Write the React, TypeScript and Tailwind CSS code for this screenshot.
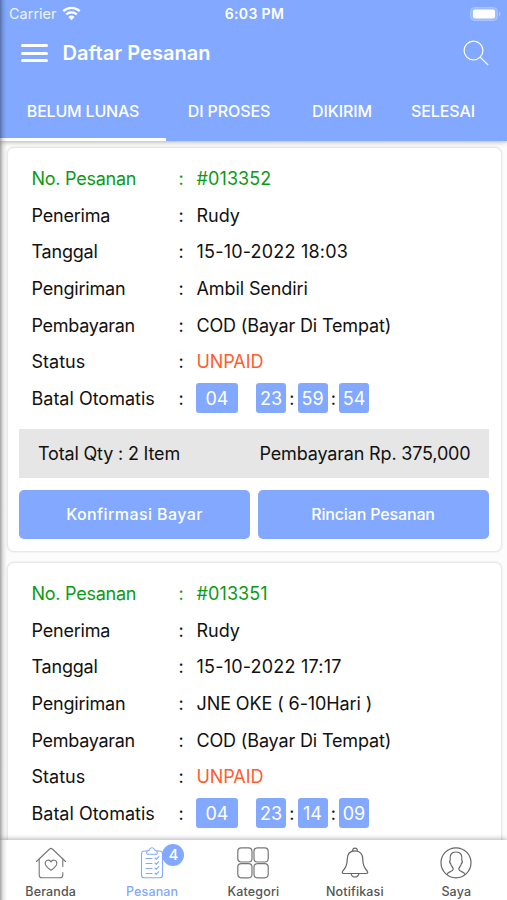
import type { ReactNode } from 'react'
import clsx from 'clsx'

type Order = {
  number: string
  recipient: string
  date: string
  shipping: string
  payment: string
  status: string
  countdown: string[]
  summary?: { quantity: number; total: string }
}

const orders: Order[] = [
  {
    number: '#013352',
    recipient: 'Rudy',
    date: '15-10-2022 18:03',
    shipping: 'Ambil Sendiri',
    payment: 'COD (Bayar Di Tempat)',
    status: 'UNPAID',
    countdown: ['04', '23', '59', '54'],
    summary: { quantity: 2, total: '375,000' },
  },
  {
    number: '#013351',
    recipient: 'Rudy',
    date: '15-10-2022 17:17',
    shipping: 'JNE OKE ( 6-10Hari )',
    payment: 'COD (Bayar Di Tempat)',
    status: 'UNPAID',
    countdown: ['04', '23', '14', '09'],
  },
]

export default function App() {
  return (
    <div className="relative flex h-[900px] w-[507px] flex-col overflow-hidden bg-[#fcfcfc] font-['Inter','Liberation_Sans',sans-serif] text-[#111] antialiased">
      <Header />
      <main className="min-h-0 flex-1 overflow-hidden pt-[6px] pr-[5.5px] pl-[6.5px]">
        {orders.map((order) => (
          <OrderCard key={order.number} order={order} />
        ))}
      </main>
      <TabBar />
      <div className="pointer-events-none absolute inset-y-0 left-0 z-20 w-[7px] bg-linear-to-r from-black/35 via-black/10 via-45% to-transparent" />
    </div>
  )
}

function Header() {
  return (
    <header className="relative z-10 h-[141px] shrink-0 bg-[#82a9ff] text-white shadow-[0_1px_5px_rgba(0,0,0,0.3)]">
      <div className="flex h-[27px] items-center justify-between pr-[6px] pl-[9px]">
        <div className="flex w-[100px] items-center gap-[5px] text-[14.5px] text-white/85">
          Carrier
          <WifiIcon />
        </div>
        <span className="text-[14px] font-semibold tracking-[0.35px]">6:03 PM</span>
        <div className="flex w-[101px] justify-end">
          <BatteryIcon />
        </div>
      </div>

      <div className="flex h-[52px] items-center pr-[18px] pl-[21px]">
        <button type="button" aria-label="Menu" className="flex w-[27px] flex-col gap-[4.5px]">
          <span className="h-[3px] rounded-full bg-white" />
          <span className="h-[3px] rounded-full bg-white" />
          <span className="h-[3px] rounded-full bg-white" />
        </button>
        <h1 className="ml-[14.5px] text-[20px] font-semibold tracking-[0.03px]">Daftar Pesanan</h1>
        <button type="button" aria-label="Cari" className="ml-auto">
          <SearchIcon />
        </button>
      </div>

      <div className="flex h-[62px] text-[16px] font-medium tracking-[-0.1px]">
        <Tab className="w-[166px] border-white tracking-[-0.2px]">BELUM LUNAS</Tab>
        <Tab className="w-[126px] border-transparent">DI PROSES</Tab>
        <Tab className="w-[100px] border-transparent">DIKIRIM</Tab>
        <Tab className="w-[102px] border-transparent">SELESAI</Tab>
      </div>
    </header>
  )
}

function Tab({ className, children }: { className: string; children: ReactNode }) {
  return (
    <button
      type="button"
      className={clsx('flex items-center justify-center border-b-[3px] pt-[4px]', className)}
    >
      {children}
    </button>
  )
}

function OrderCard({ order }: { order: Order }) {
  const [days, hours, minutes, seconds] = order.countdown

  return (
    <section className="mb-[10.5px] h-[404.5px] rounded-[7px] border border-[#e8e8e8] bg-white px-[11.5px] pt-[12.2px] shadow-[0_0_2px_rgba(0,0,0,0.12)]">
      <dl className="pl-[12.5px] text-[18px]">
        <Row label="No. Pesanan" className="tracking-[-0.25px] text-[#0b9a14]">
          <span className="tracking-[0.1px]">{order.number}</span>
        </Row>
        <Row label="Penerima" className="tracking-[-0.2px]">
          <span className="tracking-normal">{order.recipient}</span>
        </Row>
        <Row label="Tanggal" className="tracking-[-0.2px]">
          <span className="tracking-[0.2px]">{order.date}</span>
        </Row>
        <Row label="Pengiriman" className="tracking-[-0.2px]">
          <span className="tracking-[-0.1px]">{order.shipping}</span>
        </Row>
        <Row label="Pembayaran" className="tracking-[-0.3px]">
          <span className="tracking-[-0.15px]">{order.payment}</span>
        </Row>
        <Row label="Status">
          <span className="tracking-[-0.1px] text-[#ff5b2e]">{order.status}</span>
        </Row>
        <Row label="Batal Otomatis">
          <span className="-ml-[0.5px] flex items-center">
            <TimeBox className="mr-[18px] w-[42px]">{days}</TimeBox>
            <TimeBox className="w-[30px]">{hours}</TimeBox>
            <span className="w-[11.5px] text-center">:</span>
            <TimeBox className="w-[30px]">{minutes}</TimeBox>
            <span className="w-[11.5px] text-center">:</span>
            <TimeBox className="w-[30px]">{seconds}</TimeBox>
          </span>
        </Row>
      </dl>

      {order.summary ? (
        <>
          <div className="mt-[12px] flex h-[49px] items-center justify-between bg-[#e6e6e6] pr-[18.5px] pl-[19px] text-[18px] tracking-[-0.17px]">
            <span>Total Qty : {order.summary.quantity} Item</span>
            <span>Pembayaran Rp. {order.summary.total}</span>
          </div>

          <div className="mt-[12px] grid grid-cols-2 gap-[8px] text-[16px] font-medium text-white">
            <button
              type="button"
              className="h-[49px] rounded-[5px] bg-[#82a9ff] tracking-[0.4px]"
            >
              Konfirmasi Bayar
            </button>
            <button
              type="button"
              className="h-[49px] rounded-[5px] bg-[#82a9ff] pr-px tracking-[-0.15px]"
            >
              Rincian Pesanan
            </button>
          </div>
        </>
      ) : null}
    </section>
  )
}

function Row({
  label,
  className,
  children,
}: {
  label: string
  className?: string
  children: ReactNode
}) {
  return (
    <div className={clsx('flex h-[36.65px] items-center', className)}>
      <dt className="w-[147px]">{label}</dt>
      <span className="w-[18px]">:</span>
      <dd>{children}</dd>
    </div>
  )
}

function TimeBox({ className, children }: { className: string; children: ReactNode }) {
  return (
    <span
      className={clsx(
        'flex h-[30px] items-center justify-center rounded-[3px] bg-[#82a9ff] text-white',
        className,
      )}
    >
      {children}
    </span>
  )
}

function TabBar() {
  return (
    <nav className="relative z-10 grid h-[60px] shrink-0 grid-cols-5 bg-white text-[12.5px] font-medium tracking-[0.15px] text-[#555] shadow-[0_-1px_5px_rgba(0,0,0,0.3)]">
      <TabBarItem label="Beranda">
        <HomeIcon />
      </TabBarItem>
      <TabBarItem label="Pesanan" className="text-[#82a9ff]">
        <OrdersIcon />
        <span className="absolute top-[4px] left-[61px] flex size-[22px] items-center justify-center rounded-full bg-[#82a9ff] text-[15px] tracking-normal text-white">
          4
        </span>
      </TabBarItem>
      <TabBarItem label="Kategori">
        <CategoryIcon />
      </TabBarItem>
      <TabBarItem label="Notifikasi">
        <BellIcon />
      </TabBarItem>
      <TabBarItem label="Saya">
        <ProfileIcon />
      </TabBarItem>
    </nav>
  )
}

function TabBarItem({
  label,
  className,
  children,
}: {
  label: string
  className?: string
  children: ReactNode
}) {
  return (
    <a className={clsx('relative flex flex-col items-center pt-[6px]', className)}>
      {children}
      <span className="mt-[5px] leading-4">{label}</span>
    </a>
  )
}

function WifiIcon() {
  return (
    <svg width="19" height="15" viewBox="0 0 19 15" fill="none" stroke="white" strokeWidth="2.4">
      <path d="M1.3 5.2a11.8 11.8 0 0 1 16.4 0" />
      <path d="M4.2 8.5a7.6 7.6 0 0 1 10.6 0" />
      <path d="M6.4 11 9.5 14.2 12.6 11a4.5 4.5 0 0 0-6.2 0z" fill="white" stroke="none" />
    </svg>
  )
}

function BatteryIcon() {
  return (
    <svg width="31" height="14" viewBox="0 0 31 14">
      <rect x="0.5" y="0.5" width="27" height="13" rx="4" fill="#9dbbff" stroke="#abc5ff" />
      <rect x="3" y="2.5" width="22" height="9" rx="2" fill="white" />
      <path d="M29 5v4q1.5-.6 1.5-2T29 5z" fill="#b3cbff" />
    </svg>
  )
}

function SearchIcon() {
  return (
    <svg width="26" height="26" viewBox="0 0 26 26" fill="none" stroke="white" strokeWidth="1.2">
      <circle cx="10.5" cy="10.5" r="9.4" />
      <path d="m17.2 17.2 8 8" />
    </svg>
  )
}

function HomeIcon() {
  return (
    <svg
      width="32"
      height="33"
      viewBox="0 0 32 33"
      fill="none"
      stroke="#777"
      strokeWidth="1.1"
      strokeLinecap="round"
      strokeLinejoin="round"
    >
      <path d="M1.5 15.5 14.6 3q1.4-1.2 2.8 0L30.5 15.5" />
      <path d="M4.2 13v16q0 2.8 2.8 2.8h18q2.8 0 2.8-2.8v-2.5M27.8 13v7.5" />
      <path d="M16 24.3c-3-2-5.8-4-5.8-7a3 3 0 0 1 5.8-1.2 3 3 0 0 1 5.8 1.2c0 3-2.8 5-5.8 7z" />
    </svg>
  )
}

function OrdersIcon() {
  return (
    <svg
      width="32"
      height="33"
      viewBox="-0.5 0 32 33"
      fill="none"
      stroke="currentColor"
      strokeWidth="1.1"
      strokeLinecap="round"
      strokeLinejoin="round"
    >
      <path d="M10.5 5H8q-3 0-3 3v21q0 2.8 3 2.8h15q3 0 3-2.8V8q0-3-3-3h-2.5" />
      <path d="M10.5 8.2q-1-3 1.3-3.7 1.2-.2 1.3-1.2 1-1.5 2.4-1.5t2.4 1.5q.1 1 1.3 1.2 2.3.7 1.3 3.7z" />
      <path d="M9.5 12.5h6M9.5 17.5h6M9.5 22.5h6M9.5 27.5h6" />
      <path d="m18.5 12 1.3 1.3 2.4-2.6M18.5 17l1.3 1.3 2.4-2.6M18.5 22l1.3 1.3 2.4-2.6M18.5 27l1.3 1.3 2.4-2.6" />
    </svg>
  )
}

function CategoryIcon() {
  return (
    <svg width="32" height="33" viewBox="0 0 32 33" fill="none" stroke="#777" strokeWidth="1.2">
      <rect x="0.8" y="1.8" width="14.2" height="14.2" rx="3.5" />
      <rect x="17" y="1.8" width="14.2" height="14.2" rx="3.5" />
      <rect x="0.8" y="17.6" width="14.2" height="14.2" rx="3.5" />
      <rect x="17" y="17.6" width="14.2" height="14.2" rx="3.5" />
    </svg>
  )
}

function BellIcon() {
  return (
    <svg
      width="32"
      height="33"
      viewBox="0 0 32 33"
      fill="none"
      stroke="#666"
      strokeWidth="1.2"
      strokeLinejoin="round"
    >
      <path d="M16 4.8c-5 0-7.8 3.5-7.8 8.7 0 6-1.5 8.5-4.4 11.5-1 1.5-.5 2.5 1 2.5h22.4c1.5 0 2-1 1-2.5-2.9-3-4.4-5.5-4.4-11.5 0-5.2-2.8-8.7-7.8-8.7z" />
      <path d="M13.8 5a2.3 2.3 0 1 1 4.4 0M12.2 27.5a3.8 3.5 0 0 0 7.6 0" />
    </svg>
  )
}

function ProfileIcon() {
  return (
    <svg width="32" height="33" viewBox="0 0 32 33" fill="none" stroke="#666" strokeWidth="1.2">
      <circle cx="16" cy="16.8" r="15" />
      <path d="M7.2 28.5c.3-3.5 6-2.2 6-5.5 0-2-2.2-2.5-2.6-5.5-1-.8-1-2.5-.4-3.5-.6-5 1-8 5.8-8s6.4 3 5.8 8c.6 1 .6 2.7-.4 3.5-.4 3-2.6 3.5-2.6 5.5 0 3.3 5.7 2 6 5.5" />
    </svg>
  )
}
